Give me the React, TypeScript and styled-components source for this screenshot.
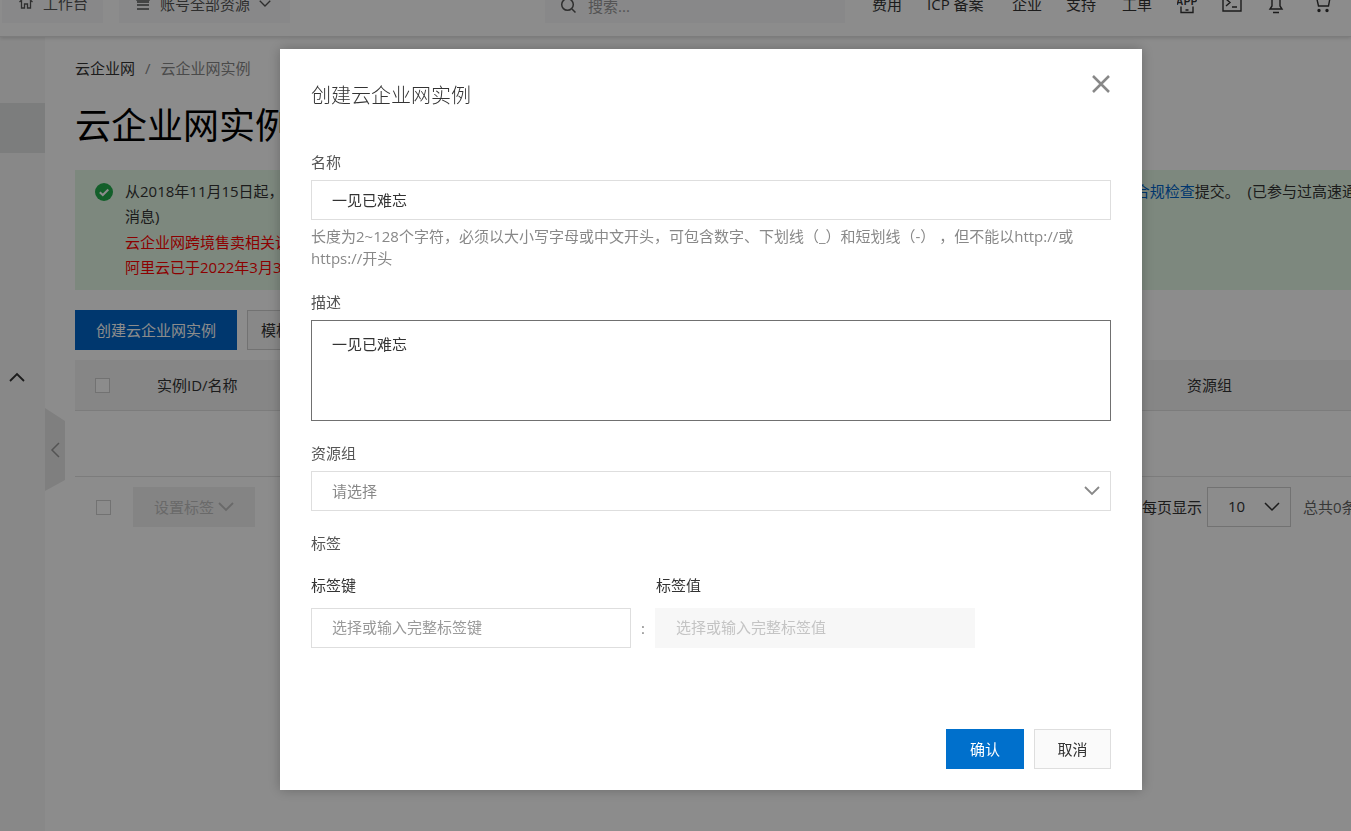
import React from "react";
import styled, { createGlobalStyle } from "styled-components";

const Global = createGlobalStyle`
  html, body { margin: 0; padding: 0; height: 100%; overflow: hidden; background: #fff; }
  body { font-family: "Open Sans", "Noto Sans CJK SC", "Liberation Sans", sans-serif; font-size: 15px; color: #333; }
  * { box-sizing: border-box; }
`;

const Page = styled.div`
  width: 1351px;
  height: 831px;
  overflow: hidden;
  display: flex;
  flex-direction: column;
`;

const TopBar = styled.header`
  height: 37px;
  flex: none;
  display: flex;
  align-items: flex-start;
  background: #fff;
  border-bottom: 1px solid #e2e2e2;
  box-shadow: 0 1px 4px rgba(0, 0, 0, 0.16);
  overflow: hidden;
  position: relative;
  z-index: 1;
`;

const TopBox = styled.div<{ $w: number; $ml: number; $pl: number; $pb: number }>`
  width: ${(p) => p.$w}px;
  margin-left: ${(p) => p.$ml}px;
  padding-left: ${(p) => p.$pl}px;
  padding-bottom: ${(p) => p.$pb}px;
  height: 36px;
  margin-top: -13px;
  flex: none;
  display: flex;
  align-items: center;
  gap: 9px;
  background: #f7f8f9;
  color: #555;
  white-space: nowrap;
`;

const TopNav = styled.nav`
  display: flex;
  align-items: center;
  height: 36px;
  margin-top: -15px;
  margin-left: 27px;
  color: #333;
  white-space: nowrap;
`;

const TopLink = styled.span<{ $w: number }>`
  width: ${(p) => p.$w}px;
  flex: none;
`;

const TopIcon = styled.span<{ $w: number }>`
  width: ${(p) => p.$w}px;
  flex: none;
  display: flex;
  margin-top: 2px;
  color: #333;
`;

const SearchText = styled.span`
  color: #999;
  margin-left: 2px;
`;

const Body = styled.div`
  flex: 1;
  display: flex;
  min-height: 0;
`;

const Side = styled.aside`
  width: 45px;
  flex: none;
  background: #f8f8f8;
  display: flex;
  flex-direction: column;
  padding-top: 66px;
`;

const SideActive = styled.div`
  height: 50px;
  background: #e2e3e3;
`;

const SideToggle = styled.div`
  height: 16px;
  margin-top: 217px;
  padding-left: 9px;
  display: flex;
  color: #333;
`;

const Main = styled.main`
  flex: 1;
  min-width: 0;
  padding: 0 0 0 30px;
  position: relative;
  overflow: hidden;
`;

const Handle = styled.div`
  position: absolute;
  left: 0;
  top: 371px;
  width: 20px;
  height: 83px;
  background: #e8e8e8;
  clip-path: polygon(0 0, 100% 13px, 100% 72px, 0 100%);
  display: flex;
  align-items: center;
  padding-left: 3px;
  color: #999;
`;

const Crumbs = styled.div`
  height: 22px;
  margin-top: 20px;
  line-height: 22px;
  display: flex;
  color: #333;
`;

const CrumbSep = styled.span`
  margin: 0 10px;
  color: #888;
`;

const CrumbNow = styled.span`
  color: #888;
`;

const PageTitle = styled.h1`
  margin: 22px 0 0;
  height: 50px;
  line-height: 50px;
  font-size: 36px;
  font-weight: 400;
  color: #000;
`;

const Alert = styled.div`
  margin-top: 19px;
  height: 120px;
  background: #e4f8e6;
  padding: 9px 0 0 20px;
  display: flex;
  gap: 12px;
`;

const AlertIcon = styled.span`
  width: 18px;
  height: 18px;
  margin-top: 4px;
  flex: none;
  display: flex;
`;

const AlertText = styled.div`
  line-height: 25.4px;
  white-space: nowrap;
  color: #333;
`;

const Hidden = styled.span`
  display: inline-block;
  width: 851px;
`;

const AlertLink = styled.span`
  color: #0064c8;
`;

const Danger = styled.div`
  color: #f00;
`;

const Actions = styled.div`
  margin-top: 20px;
  display: flex;
  gap: 10px;
`;

const PrimaryAction = styled.div`
  width: 162px;
  height: 40px;
  padding-bottom: 2px;
  background: #0064c8;
  color: #fff;
  display: flex;
  align-items: center;
  justify-content: center;
`;

const OutlineAction = styled.div`
  width: 120px;
  height: 40px;
  border: 1px solid #d0d0d0;
  background: #f7f7f7;
  padding: 0 0 2px 13px;
  display: flex;
  align-items: center;
  color: #333;
`;

const TableHead = styled.div`
  margin-top: 10px;
  height: 51px;
  background: #f5f5f5;
  border-bottom: 1px solid #e2e2e2;
  display: flex;
  align-items: center;
  padding-left: 20px;
  color: #333;
`;

const Check = styled.span`
  width: 15px;
  height: 15px;
  flex: none;
  border: 1px solid #d0d0d0;
  background: #fff;
`;

const HeadCell = styled.span<{ $w: number; $ml: number }>`
  width: ${(p) => p.$w}px;
  margin-left: ${(p) => p.$ml}px;
  margin-bottom: 2px;
  flex: none;
`;

const EmptyRow = styled.div`
  height: 66px;
  border-bottom: 1px solid #e2e2e2;
`;

const TableFoot = styled.div`
  margin-top: 10px;
  height: 40px;
  display: flex;
  align-items: center;
  padding-left: 21px;
`;

const DisabledBtn = styled.div`
  width: 122px;
  height: 40px;
  flex: none;
  margin-left: 22px;
  padding-bottom: 2px;
  background: #f0f0f0;
  color: #c0c0c0;
  display: flex;
  align-items: center;
  justify-content: center;
  gap: 4px;
`;

const PageSizeLabel = styled.span`
  margin-left: 887px;
  margin-bottom: 2px;
  width: 65px;
  flex: none;
  color: #333;
`;

const PageSize = styled.div`
  width: 84px;
  height: 40px;
  flex: none;
  border: 1px solid #d0d0d0;
  display: flex;
  align-items: center;
  justify-content: space-between;
  padding: 0 10px 2px 20px;
  color: #333;
`;

const Total = styled.span`
  margin-left: 12px;
  margin-bottom: 2px;
  color: #666;
  white-space: nowrap;
`;

const Overlay = styled.div`
  position: fixed;
  inset: 0;
  background: rgba(0, 0, 0, 0.45);
  z-index: 10;
`;

const Modal = styled.section`
  position: fixed;
  left: 280px;
  top: 49px;
  width: 862px;
  height: 741px;
  background: #fff;
  z-index: 11;
  box-shadow: 0 0 12px rgba(0, 0, 0, 0.25);
  padding: 32px 31px 21px;
  display: flex;
  flex-direction: column;
`;

const ModalTitle = styled.h2`
  margin: 0;
  height: 30px;
  line-height: 30px;
  font-size: 20px;
  font-weight: 300;
  color: #333;
`;

const Close = styled.span`
  position: absolute;
  right: 31px;
  top: 25px;
  display: flex;
  color: #888;
`;

const FieldLabel = styled.div<{ $mt: number }>`
  margin-top: ${(p) => p.$mt}px;
  height: 20px;
  line-height: 20px;
  color: #555;
`;

const Input = styled.input`
  display: block;
  width: 100%;
  height: 40px;
  margin-top: 8px;
  padding: 0 20px 2px;
  border: 1px solid #dedede;
  border-radius: 0;
  outline: none;
  background: #fff;
  font: inherit;
  color: #333;
  &::placeholder { color: #888; opacity: 1; }
`;

const Help = styled.div`
  margin-top: 5px;
  line-height: 22px;
  color: #888;
`;

const Area = styled.textarea`
  display: block;
  width: 100%;
  height: 101px;
  margin-top: 8px;
  padding: 13px 20px;
  border: 1px solid #707070;
  border-radius: 0;
  outline: none;
  resize: none;
  font: inherit;
  line-height: 20px;
  color: #333;
`;

const Select = styled.div`
  height: 40px;
  margin-top: 8px;
  padding: 0 10px 2px 20px;
  border: 1px solid #dedede;
  display: flex;
  align-items: center;
  justify-content: space-between;
  color: #888;
`;

const TagHeads = styled.div`
  margin-top: 22px;
  display: flex;
  height: 20px;
  line-height: 20px;
  color: #333;
`;

const TagHead = styled.span`
  width: 345px;
  flex: none;
`;

const TagRow = styled.div`
  margin-top: 13px;
  display: flex;
  align-items: center;
`;

const TagInput = styled(Input)`
  width: 320px;
  margin-top: 0;
  &::placeholder { color: #999; }
`;

const TagInputOff = styled(Input)`
  width: 320px;
  margin-top: 0;
  background: #f7f7f7;
  border-color: #f7f7f7;
  &::placeholder { color: #c4c4c4; }
`;

const Colon = styled.span`
  width: 24px;
  text-align: center;
  color: #888;
`;

const Footer = styled.footer`
  margin-top: auto;
  display: flex;
  justify-content: flex-end;
  gap: 10px;
`;

const Confirm = styled.button`
  width: 78px;
  height: 40px;
  border: 0;
  background: #0070cc;
  color: #fff;
  font: inherit;
  padding: 0 0 2px;
`;

const Cancel = styled.button`
  width: 77px;
  height: 40px;
  border: 1px solid #dedede;
  background: #fafafa;
  color: #333;
  font: inherit;
  padding: 0 0 2px;
`;

const Chevron = ({ size = 16, dir = "down", w = 1.5 }: { size?: number; dir?: "down" | "up" | "left"; w?: number }) => {
  const d = dir === "down" ? "M1 5l7 7 7-7" : dir === "up" ? "M1 11l7-7 7 7" : "M11 1L4 8l7 7";
  return (
    <svg width={size} height={size} viewBox="0 0 16 16" fill="none" stroke="currentColor" strokeWidth={w}>
      <path d={d} />
    </svg>
  );
};

const Home = () => (
  <svg width="16" height="16" viewBox="0 0 16 16" fill="none" stroke="currentColor" strokeWidth="1.3">
    <path d="M1.5 8L8 2l6.500 6M3.500 7v7h3v-4h3v4h3V7" />
  </svg>
);

const Stack = () => (
  <svg width="16" height="16" viewBox="0 0 16 16" fill="none" stroke="currentColor" strokeWidth="1.4">
    <path d="M2 2h12v3H2zM2 7h12M2 10h12M2 14h12" />
  </svg>
);

const Search = () => (
  <svg width="17" height="17" viewBox="0 0 17 17" fill="none" stroke="currentColor" strokeWidth="1.5">
    <circle cx="7.500" cy="7.500" r="5.800" />
    <path d="M12 12l3.500 3.500" />
  </svg>
);

const AppIcon = () => (
  <svg width="20" height="20" viewBox="0 0 20 20" fill="none" stroke="currentColor" strokeWidth="1.4">
    <text x="10" y="11" textAnchor="middle" fontSize="10" fontWeight="700" letterSpacing="0.5" fill="currentColor" stroke="none" fontFamily="Liberation Sans, sans-serif">APP</text>
    <path d="M4 12.500v6h12v-6M8.500 16h3" />
  </svg>
);

const Terminal = () => (
  <svg width="20" height="20" viewBox="0 0 20 20" fill="none" stroke="currentColor" strokeWidth="1.4">
    <path d="M1 1h18v16H1zM4 5l4 3.500L4 12M10 13h5" />
  </svg>
);

const Bell = () => (
  <svg width="18" height="20" viewBox="0 0 18 20" fill="none" stroke="currentColor" strokeWidth="1.4">
    <path d="M5 3v9l-2 3h12l-2-3V3M6 18.500h6" />
  </svg>
);

const Cart = () => (
  <svg width="20" height="20" viewBox="0 0 20 20" fill="none" stroke="currentColor" strokeWidth="1.4">
    <path d="M1 1h3l2.500 11h10L18 4" />
    <circle cx="7" cy="16.500" r="1" fill="currentColor" />
    <circle cx="15" cy="16.500" r="1" fill="currentColor" />
  </svg>
);

const SuccessIcon = () => (
  <svg width="18" height="18" viewBox="0 0 18 18">
    <circle cx="9" cy="9" r="9" fill="#23ad4e" />
    <path d="M4.800 9.200l3 2.800 5.500-5.500" fill="none" stroke="#fff" strokeWidth="2" />
  </svg>
);

const X = () => (
  <svg width="20" height="20" viewBox="0 0 20 20" fill="none" stroke="currentColor" strokeWidth="2.500">
    <path d="M2 2l16 16M18 2L2 18" />
  </svg>
);

export default function App() {
  return (
    <Page>
      <Global />
      <TopBar>
        <TopBox $w={101} $ml={2} $pl={16} $pb={6}>
          <Home />
          工作台
        </TopBox>
        <TopBox $w={171} $ml={16} $pl={16} $pb={4}>
          <Stack />
          账号全部资源
          <Chevron size={12} w={1.800} />
        </TopBox>
        <TopBox $w={300} $ml={255} $pl={15} $pb={0}>
          <Search />
          <SearchText>搜索...</SearchText>
        </TopBox>
        <TopNav>
          <TopLink $w={55}>费用</TopLink>
          <TopLink $w={85}>ICP 备案</TopLink>
          <TopLink $w={54}>企业</TopLink>
          <TopLink $w={56}>支持</TopLink>
          <TopLink $w={55}>工单</TopLink>
          <TopIcon $w={45}><AppIcon /></TopIcon>
          <TopIcon $w={45}><Terminal /></TopIcon>
          <TopIcon $w={45}><Bell /></TopIcon>
          <TopIcon $w={20}><Cart /></TopIcon>
        </TopNav>
      </TopBar>
      <Body>
        <Side>
          <SideActive />
          <SideToggle><Chevron dir="up" w={1.800} /></SideToggle>
        </Side>
        <Main>
          <Handle><Chevron size={16} dir="left" /></Handle>
          <Crumbs>
            云企业网<CrumbSep>/</CrumbSep><CrumbNow>云企业网实例</CrumbNow>
          </Crumbs>
          <PageTitle>云企业网实例</PageTitle>
          <Alert>
            <AlertIcon><SuccessIcon /></AlertIcon>
            <AlertText>
              <div>
                从2018年11月15日起，<Hidden /><AlertLink>合规检查</AlertLink>提交。{"\u00a0\u00a0"}(已参与过高速通道的用户请留意站内消息)
              </div>
              <div>消息)</div>
              <Danger>云企业网跨境售卖相关说明</Danger>
              <Danger>阿里云已于2022年3月31日</Danger>
            </AlertText>
          </Alert>
          <Actions>
            <PrimaryAction>创建云企业网实例</PrimaryAction>
            <OutlineAction>模板</OutlineAction>
          </Actions>
          <TableHead>
            <Check />
            <HeadCell $w={200} $ml={47}>实例ID/名称</HeadCell>
            <HeadCell $w={60} $ml={830}>资源组</HeadCell>
          </TableHead>
          <EmptyRow />
          <TableFoot>
            <Check />
            <DisabledBtn>设置标签 <Chevron size={16} w={1.800} /></DisabledBtn>
            <PageSizeLabel>每页显示</PageSizeLabel>
            <PageSize>10 <Chevron size={16} /></PageSize>
            <Total>总共0条</Total>
          </TableFoot>
        </Main>
      </Body>
      <Overlay />
      <Modal>
        <ModalTitle>创建云企业网实例</ModalTitle>
        <Close><X /></Close>
        <FieldLabel $mt={41}>名称</FieldLabel>
        <Input readOnly value="一见已难忘" />
        <Help>长度为2~128个字符，必须以大小写字母或中文开头，可包含数字、下划线（_）和短划线（-）{"\u00a0"}，但不能以http://或https://开头</Help>
        <FieldLabel $mt={23}>描述</FieldLabel>
        <Area readOnly value="一见已难忘" />
        <FieldLabel $mt={22}>资源组</FieldLabel>
        <Select>请选择<Chevron size={16} w={1.800} /></Select>
        <FieldLabel $mt={22}>标签</FieldLabel>
        <TagHeads>
          <TagHead>标签键</TagHead>
          <TagHead>标签值</TagHead>
        </TagHeads>
        <TagRow>
          <TagInput readOnly placeholder="选择或输入完整标签键" />
          <Colon>:</Colon>
          <TagInputOff readOnly placeholder="选择或输入完整标签值" />
        </TagRow>
        <Footer>
          <Confirm>确认</Confirm>
          <Cancel>取消</Cancel>
        </Footer>
      </Modal>
    </Page>
  );
}
